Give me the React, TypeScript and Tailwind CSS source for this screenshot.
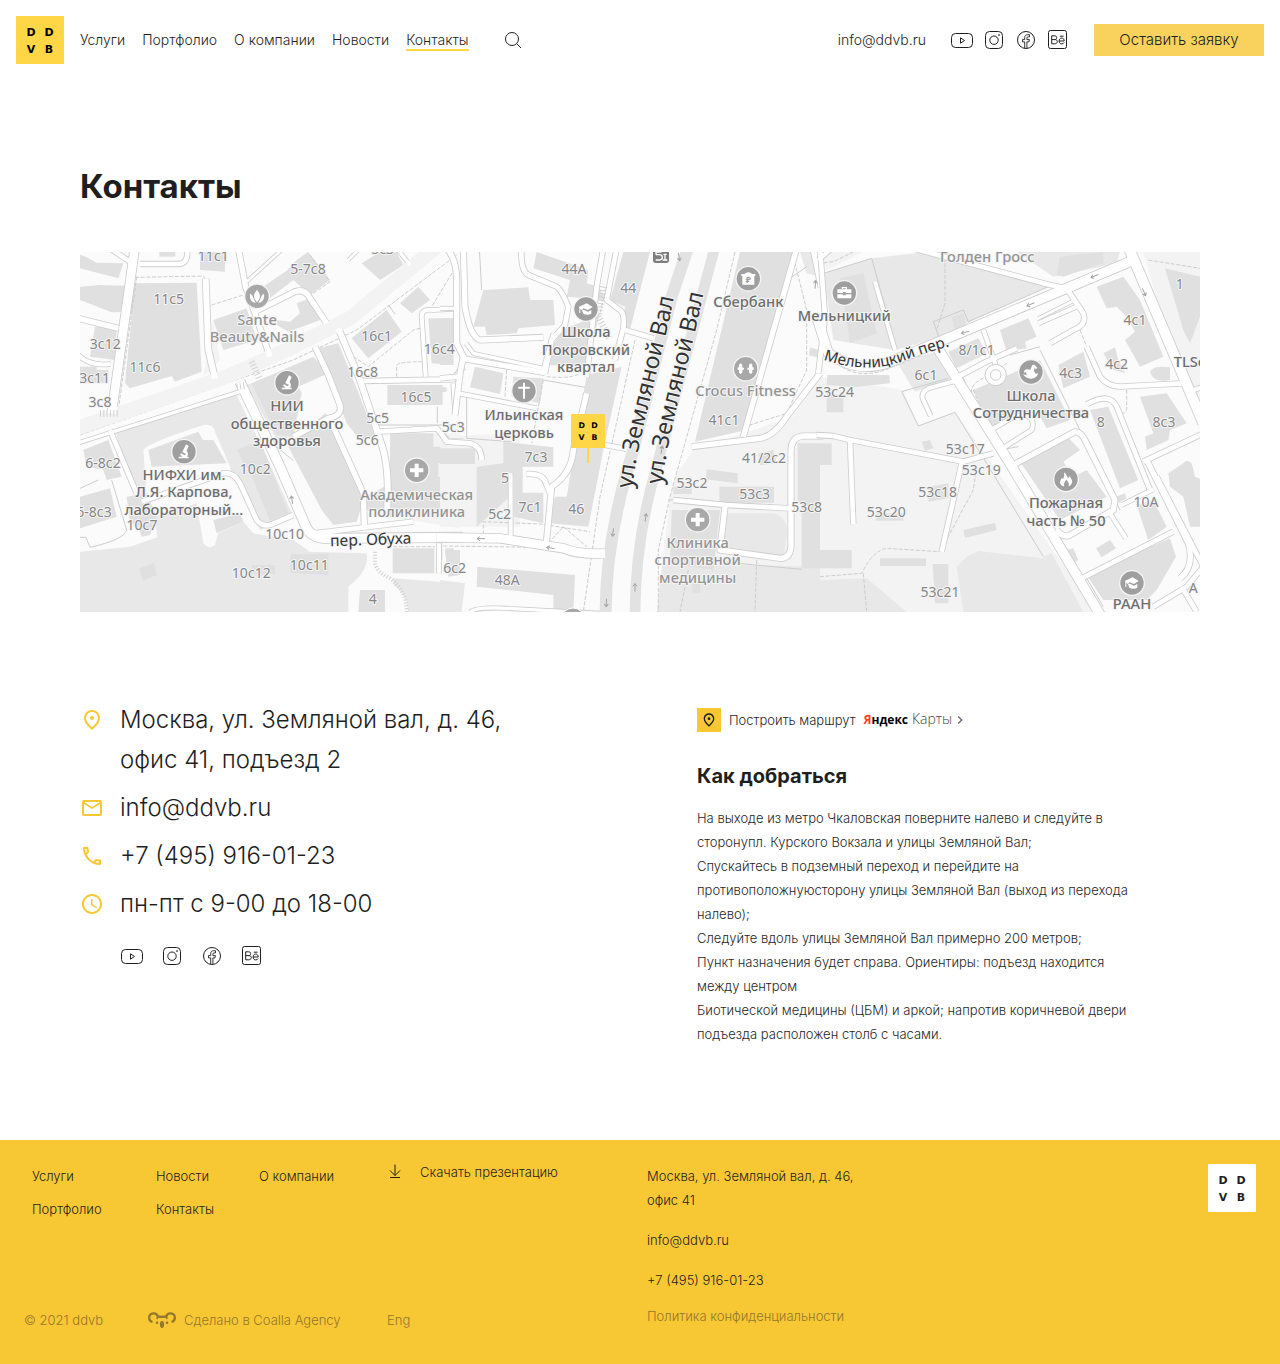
import type { ReactNode } from "react";
import { MdAccessTime, MdChevronRight, MdOutlineEmail, MdOutlinePhone, MdOutlinePlace } from "react-icons/md";

/* ---------- Logo and small icons ---------- */

function LogoLetters({ fill }: { fill: string }) {
  return (
    <g fill={fill} fontFamily='"DejaVu Sans", sans-serif' fontWeight={700} fontSize={11} textAnchor="middle">
      <text x="15" y="20">D</text>
      <text x="33" y="20">D</text>
      <text x="15" y="37">V</text>
      <text x="33" y="37">B</text>
    </g>
  );
}

function Logo({ background, color }: { background: string; color: string }) {
  return (
    <svg viewBox="0 0 48 48" className="size-12 shrink-0" role="img" aria-label="DDVB">
      <rect width="48" height="48" fill={background} />
      <LogoLetters fill={color} />
    </svg>
  );
}

function YoutubeIcon() {
  return (
    <svg viewBox="0 0 24 24" className="size-6" fill="none" stroke="#1f1f1f" strokeLinejoin="round">
      <rect x="1.5" y="5.5" width="21" height="14" rx="4" />
      <path d="M10.5 9.8v5.4l4-2.7z" />
    </svg>
  );
}

function InstagramIcon() {
  return (
    <svg viewBox="0 0 24 24" className="size-6" fill="none" stroke="#1f1f1f">
      <rect x="3.5" y="3.5" width="17" height="17" rx="4" />
      <circle cx="12" cy="12.2" r="4.2" />
      <circle cx="17" cy="7" r="0.6" fill="#1f1f1f" strokeWidth="0.5" />
    </svg>
  );
}

function FacebookIcon() {
  return (
    <svg viewBox="0 0 24 24" className="size-6" fill="none" stroke="#1f1f1f">
      <circle cx="12" cy="12" r="8.5" />
      <path d="M10.7 20.3v-6.4H8.5v-2.3h2.2v-1.9c0-2 1.200-3 3-3h1.800v2.200h-1.300c-.9 0-1.300.4-1.300 1.200v1.500h2.500l-.4 2.300h-2.100v6.400" strokeWidth="0.9" />
    </svg>
  );
}

function BehanceIcon() {
  return (
    <svg viewBox="0 0 24 24" className="size-6" fill="none" stroke="#1f1f1f">
      <rect x="2.500" y="2.500" width="18" height="18" rx="2" />
      <path d="M5.700 7.800v8h3c1.700 0 2.600-.9 2.600-2.200 0-1.200-.8-2-2.200-2H5.700M5.700 7.800h2.800c1.400 0 2.200.7 2.200 1.900 0 1.100-.8 1.900-2 1.900M13.200 13h5c0-1.800-.9-2.900-2.500-2.900s-2.600 1.200-2.600 2.900c0 1.800 1 2.900 2.700 2.900 1.100 0 1.900-.5 2.300-1.400M13.800 8.200h3.800" />
    </svg>
  );
}

function KoalaIcon() {
  return (
    <svg viewBox="0 0 28 16" className="h-4 w-7" fill="none" stroke="#93772b" strokeWidth="2.200">
      <path d="M4.500 10A4.400 4.400 0 1 1 9.800 4.600M18.200 4.600A4.400 4.400 0 1 1 23.500 10" />
      <path d="M9.800 4.600L8.800 7M18.200 4.600L19.200 7" strokeWidth="1.600" />
      <path d="M9.500 4.400Q14 5.400 18.500 4.400" />
      <g fill="#93772b" stroke="none">
        <circle cx="9" cy="10.800" r="1.300" />
        <circle cx="19" cy="10.800" r="1.300" />
        <ellipse cx="14" cy="12.500" rx="2.100" ry="3.400" />
      </g>
    </svg>
  );
}

function Socials({ className }: { className: string }) {
  const items: [string, ReactNode][] = [
    ["YouTube", <YoutubeIcon />],
    ["Instagram", <InstagramIcon />],
    ["Facebook", <FacebookIcon />],
    ["Behance", <BehanceIcon />],
  ];
  return (
    <div className={className}>
      {items.map(([name, icon]) => (
        <a key={name} href="#" aria-label={name}>{icon}</a>
      ))}
    </div>
  );
}

/* ---------- Map: three side-by-side tiles, three drawing units per pixel ---------- */

type Tile = {
  x: number;
  light?: string[];
  parks: string[];
  clear?: string[];
  buildings: string[];
  avenues?: [string, number][];
  roads: [string, number][];
  thin: string[];
  dashed: string[];
};

const tiles: Tile[] = [
  {
    x: 0,
    light: ["M930 550H1140V835L930 800Z", "M400 210L420 330L370 380Z"],
    parks: [
      "M105 540L465 425L560 620L640 800L540 840L470 690L430 670L200 750L160 720Z",
      "M0 905L150 890L232 862L225 800L350 760L370 880Q385 900 405 885L415 850L490 815L520 850L640 870L690 905L860 910Q870 960 805 1010V1086H0Z",
      "M500 405L560 385L640 560L590 570Z",
      "M940 985L1140 1000V1086H985Q980 1030 940 1005Z",
    ],
    clear: ["M190 600Q200 580 370 525Q400 520 405 545L450 650L455 740L200 745Z", "M650 370L700 400L720 470L670 520Z"],
    buildings: [
      "M165 100L350 98L365 365L285 395L275 378L150 415L135 400Z",
      "M0 110L60 105L165 108V185L95 187L0 150Z",
      "M0 14L20 22L50 38L130 40L115 85L0 55Z",
      "M360 6H435V65L360 60Z",
      "M238 6H286V20H238Z",
      "M535 120L620 62L650 30L685 6L750 90L690 135L640 90L555 155Z",
      "M650 160L700 140L735 205L625 245L590 225L590 210L630 215L660 190Z",
      "M400 210L500 175L530 270L430 300Z",
      "M815 265L920 180L965 245L865 325Z",
      "M960 160L1015 110L1050 150L995 190Z",
      "M845 40L900 6H950L970 45L900 90Z",
      "M1045 205H1120V345L1055 340Z",
      "M715 295L775 280L840 440L885 560L840 570L800 520Z",
      "M922 405H1088V412H1100V426H1088V465H922Z",
      "M515 400L700 320L745 370L655 410L665 430L640 560L590 555Z",
      "M625 590L735 490L770 520L850 750L830 815L760 825L725 780Z",
      "M470 600L540 570L625 790L570 812L520 690Z",
      "M205 600L355 545L368 570L400 570L440 640L215 650Z",
      "M515 945H585V972H515Z",
      "M632 912H745V975L630 968Z",
      "M140 740L200 730L230 800L210 855L185 860L175 830L150 820Z",
      "M178 955L222 938L230 975L188 992Z",
      "M400 810L480 790L490 815L410 850Z",
      "M45 230L110 235L105 330L30 320Z",
      "M0 350H50V360H85V400H0Z",
      "M10 600L85 570L125 680L80 690L70 660L20 650Z",
      "M0 740L90 715L110 800L0 835Z",
      "M930 550H1060V590H1140V640H1075V680H1140V780H860V740L930 700Z",
      "M938 895H1063V970H938Z",
      "M840 1020H915V1086H835Z",
      "M1095 900H1140V975H1105Z",
    ],
    avenues: [["M-10 535L440 380L620 300L810 205L1070 -10", 44]],
    roads: [
      ["M165 -10L130 240L95 490", 26],
      ["M-5 205L115 235", 16],
      ["M-5 315Q30 350 92 342", 12],
      ["M90 -5L150 35", 14],
      ["M180 42H295Q325 42 322 -5", 14],
      ["M377 85L385 300L405 385", 18],
      ["M475 -5L497 110L570 320", 16],
      ["M525 185L645 125Q675 115 690 145L740 220", 16],
      ["M775 235L840 390L900 570Q932 650 920 800", 18],
      ["M705 290L745 375L780 465Q788 498 745 505L640 560", 16],
      ["M750 508L850 730L853 830", 16],
      ["M-10 580L480 425", 10],
      ["M480 395L600 650L680 835Q700 870 760 865L1150 862", 28],
      ["M90 540L170 730", 14],
      ["M185 755L430 670Q460 665 480 700L530 810Q545 830 570 825L640 795", 14],
      ["M700 850L1000 815", 14],
      ["M850 393L1120 388L1150 350", 14],
      ["M1037 380L1025 200Q1025 175 1060 180L1140 175", 12],
      ["M1120 400L1125 480", 12],
      ["M895 545L1070 535L1105 575H1150", 14],
      ["M1077 880V970", 12],
      ["M500 95L610 -5", 8],
      ["M805 30L840 -5", 8],
      ["M950 -5L990 45", 10],
    ],
    thin: ["M95 690L140 840Q130 870 30 892L18 862H0", "M850 410L880 525H1140", "M1072 470V520", "M0 715L55 690", "M925 165L945 192", "M590 590L640 632"],
    dashed: [
      "M165 82L370 78L380 90",
      "M170 80L115 480",
      "M110 475L470 350L740 235",
      "M395 165L490 135",
      "M0 555L440 400L640 330L830 240L1130 15",
      "M700 130L750 95L690 15",
      "M820 320L865 350L1000 240L1020 235",
      "M1125 55L1055 170",
      "M950 380V345Q960 335 1030 335",
      "M940 890H1065",
    ],
  },
  {
    x: 1080,
    light: ["M690 700L760 600L1060 500L1140 380V1086H650Z", "M0 560L240 550V830H0Z"],
    parks: ["M0 990L75 1000L65 1086H0Z", "M660 940L1140 950V1086H650Z", "M1080 6H1140V80L1100 70Z", "M860 790H1000Q1042 800 1042 850L1030 922L850 895Z"],
    clear: ["M640 6L885 6L690 740L650 1086H440L480 830L560 480Z"],
    buildings: [
      "M290 6L445 60L440 100L475 110L500 150L380 140L390 90L280 55Z",
      "M130 120L265 112L270 150L340 150L345 225L235 235L230 250L140 255L135 230L100 230Z",
      "M550 6H630L590 160L570 240L545 230L555 170L510 150Z",
      "M0 205H40V345H0Z",
      "M370 240L480 190L450 300L440 350L330 345L335 290Z",
      "M440 375L545 350L490 600L445 830L330 820L345 740L380 740Z",
      "M220 380L310 385L300 460L215 440Z",
      "M105 350L190 370L180 432L90 412Z",
      "M190 575L340 592V650H248V728H310V820L222 800V670L210 740L110 830V650L190 640Z",
      "M0 595H105V642H0Z",
      "M112 950L405 975L400 1086H340V1035L110 1010Z",
      "M15 895H42V912H60V975L25 980Z",
      "M900 6H1065L1040 90L920 540L765 575L830 300Z",
      "M695 780L840 780L820 960L690 940Z",
      "M757 1000H780V1028H757Z",
      "M800 658L893 670V700L798 688Z",
      "M838 710H1002V758H838Z",
      "M700 710H755V732H700Z",
      "M1073 580H1140V955H1085V760H1073Z",
      "M955 610L1000 600L1010 640L960 645Z",
      "M1110 292L1135 300L1130 322L1107 316Z",
    ],
    avenues: [
      ["M745 -10L695 140L580 600Q495 870 497 1100", 36],
      ["M825 -10L785 140L650 650Q585 870 585 1100", 32],
    ],
    roads: [
      ["M20 -5Q52 30 50 100V280L70 320L60 370L45 495", 16],
      ["M70 -5L75 170Q90 260 120 270L310 262", 16],
      ["M65 325L315 368", 16],
      ["M55 430L290 475", 12],
      ["M78 280L100 310L310 355L340 250", 10],
      ["M245 -5Q240 60 265 75L350 110Q365 120 385 170L375 225L335 270L315 370", 14],
      ["M490 -5L470 110L440 380", 14],
      ["M530 -5L500 150L540 180Q555 190 550 235L525 330", 14],
      ["M555 240L640 265", 14],
      ["M440 430L400 600Q395 670 335 710L318 890", 16],
      ["M260 672Q310 670 318 700L330 730", 14],
      ["M495 585L560 597", 14],
      ["M0 385L55 380", 14],
      ["M0 545L20 575L90 580Q125 590 125 630", 14],
      ["M0 175H45", 10],
      ["M212 670V860", 12],
      ["M-10 862L180 865L370 895Q420 915 495 910", 26],
      ["M90 1086Q110 1070 200 1075L480 1090", 10],
      ["M1070 -5L910 560", 16],
      ["M755 590L960 565Q1000 560 1040 500L1140 370", 16],
      ["M1120 -10L1145 110", 20],
      ["M700 750L860 765L1050 775", 14],
      ["M855 770L840 900L1020 925Q1050 925 1053 890V600Q1055 560 1090 558H1150", 16],
    ],
    thin: ["M5 880V930", "M80 430V565L215 575", "M310 390L435 412", "M840 935L1085 958", "M1050 85L1100 50", "M685 750H740", "M118 -5L125 120"],
    dashed: [
      "M585 270L480 740L430 1086",
      "M885 6L830 240L690 740L655 900V1086",
      "M130 870V815L300 822L450 845",
      "M325 880L370 830L440 890",
      "M200 360L195 440",
      "M310 390L275 580",
      "M320 380Q430 390 430 350",
      "M1060 20L1100 180V360L1040 490L930 525",
      "M500 110L480 190",
      "M745 960L720 1086",
      "M950 930L945 1086",
      "M10 888L300 892L440 905",
    ],
  },
  {
    x: 2220,
    light: ["M0 380L250 420L295 525L405 485L830 1086H0Z", "M970 6H1140V520L1080 390Z", "M0 6H130L20 60Z"],
    parks: [
      "M10 70L155 25L320 6L690 108L480 200L370 260L225 300L165 290L40 270Z",
      "M440 920L475 903L670 925L760 1086H430L410 950Z",
      "M0 990L140 985L260 1086H0Z",
      "M670 920L695 910L790 1086H700Z",
      "M230 335L350 305L400 385L285 425Z",
      "M590 6H900L890 40L700 80Z",
    ],
    clear: ["M740 230L860 200L1060 380L870 400L840 380L800 280Z"],
    buildings: [
      "M60 85L130 70L170 250L90 280Z",
      "M720 20L850 6V40L730 80L710 75Z",
      "M1035 55L1140 80V200L1110 280L1090 240Z",
      "M830 110L910 80L960 150L1030 320L960 350L915 270L945 245L920 200L890 170L860 175Z",
      "M850 310L885 292L895 330L915 370L880 360Z",
      "M715 345L790 305L810 380L730 415Z",
      "M540 240L625 205L650 260L615 275L620 295L560 305Z",
      "M385 305L475 265L500 310L410 355Z",
      "M460 420L600 360L660 330L750 510L680 535L650 480L510 530Z",
      "M600 635L740 558L780 600L730 635L760 680L800 660L860 740L720 810Z",
      "M810 480L865 470L955 690L900 715Z",
      "M960 440L1040 430L1100 520L1050 540L1045 570L980 600L975 560L1000 550Z",
      "M990 365Q1000 345 1050 352V390Q1000 400 990 365Z",
      "M1045 670L1090 640Q1100 625 1115 640L1125 680L1150 690V830H1110L1090 740L1050 710Z",
      "M950 765L1000 750L1040 830L985 870Z",
      "M800 975L1050 865L1068 920L1010 1020L980 1050H850Z",
      "M828 895L870 870L888 895L845 922Z",
      "M740 900L760 895L775 930L760 940Z",
      "M22 375H208L210 400L100 412L20 405Z",
      "M20 425L70 440V487H20Z",
      "M0 580H35V645H0Z",
      "M325 710L385 700V745L325 755Z",
      "M430 840L525 818L530 840L435 864Z",
      "M0 900H95V955H0Z",
      "M180 925H318V948H180Z",
      "M338 942H385V1060H345Z",
      "M395 200L430 190L440 230L405 245Z",
      "M305 575L330 570L340 595L315 602Z",
      "M888 740L915 730L920 745L892 760Z",
      "M168 790H250V812H168Z",
    ],
    roads: [
      ["M-10 200L25 310Q110 370 200 340L370 270L930 35", 28],
      ["M0 -5L15 200L-5 370", 14],
      ["M-5 30L30 0", 12],
      ["M260 -10L690 105L740 115L790 190Q800 222 770 235L690 280", 14],
      ["M165 95L225 300", 12],
      ["M655 220L770 170", 12],
      ["M655 205L765 150", 8],
      ["M490 240L527 345", 12],
      ["M415 380L500 335L590 295", 14],
      ["M405 393L325 415Q300 430 310 450L332 498", 12],
      ["M512 540L600 490Q650 500 635 540L540 600", 12],
      ["M-10 555L40 558L90 570L430 635L520 610", 14],
      ["M90 570L100 822", 14],
      ["M425 640L365 905", 14],
      ["M800 290L840 380Q860 408 900 410L1085 400", 14],
      ["M800 463Q870 425 890 470L990 720", 14],
      ["M570 650L765 545Q785 545 800 580L885 750L880 780L750 855Q730 865 710 840", 16],
      ["M870 790L918 865", 12],
      ["M905 765L1000 718", 12],
      ["M350 290L570 640L850 1110", 28],
      ["M925 -10L1150 520", 30],
      ["M970 635L1150 550", 14],
      ["M980 630L1105 880Q1125 950 1080 985", 16],
      ["M1010 680L1150 950L1100 1010L1000 1070", 14],
      ["M785 985L1060 845", 14],
      ["M1120 420L1150 410", 12],
      ["M1085 1010L1130 1086", 14],
    ],
    thin: [
      "M245 425L295 528L405 487L500 640L670 920",
      "M245 425L385 385",
      "M340 215L430 180L445 215L690 108",
      "M340 215L360 270",
      "M155 25L225 280",
      "M10 70L155 25",
      "M660 300L760 500L900 780",
      "M595 590L540 600L600 680",
      "M430 385L500 550",
      "M570 315L660 290",
      "M800 985L850 1070",
    ],
    dashed: [
      "M375 6V160L350 240",
      "M40 330Q110 400 220 350L920 55",
      "M780 240L800 290L830 340",
      "M460 420L500 520",
      "M0 980L125 970Q160 900 200 895L360 905L460 720L470 650",
      "M130 970L140 1086",
      "M985 30L1140 55",
      "M920 420V480L900 500L960 620",
      "M940 60L1120 480",
      "M580 660L680 820L800 1030",
      "M455 430Q450 400 500 380L560 340",
      "M0 0V40L40 35L100 6",
    ],
  },
];

// House numbers: label, centre x, baseline y
const houses: [string, number, number][] = [
  ["11с1", 400, 34], ["5-7с8", 684, 72], ["5с3", 908, 12], ["11с5", 266, 162], ["3с12", 76, 297], ["11с6", 195, 366],
  ["3с11", 44, 400], ["3с8", 60, 470], ["16с1", 890, 273], ["16с4", 1078, 312], ["16с8", 848, 381], ["16с5", 1008, 456],
  ["5с5", 893, 518], ["5с6", 862, 586], ["5с3", 1120, 546], ["6-8с2", 69, 654], ["6-8с3", 42, 800], ["10с2", 526, 672],
  ["10с7", 186, 841], ["10с10", 614, 867], ["10с12", 514, 984], ["10с11", 688, 960], ["4", 878, 1062], ["6с2", 1124, 970],
  ["44А", 1482, 72], ["44", 1645, 130], ["7с3", 1368, 636], ["5", 1275, 699], ["5с2", 1259, 806], ["7с1", 1350, 787],
  ["46", 1489, 791], ["48А", 1282, 1006], ["41с1", 1932, 525], ["41/2с2", 2052, 639], ["53с2", 1836, 713], ["53с3", 2024, 748],
  ["53с8", 2180, 787], ["53с24", 2264, 441], ["8/1с1", 2690, 315], ["6с1", 2538, 391], ["4с1", 3165, 224], ["1", 3299, 117],
  ["4с3", 2972, 384], ["4с2", 3110, 358], ["8", 3062, 530], ["8с3", 3252, 530], ["53с17", 2656, 612], ["53с19", 2704, 676],
  ["53с18", 2573, 741], ["53с20", 2419, 801], ["53с21", 2580, 1040], ["10А", 3198, 771], ["А", 3340, 1030],
];

type Glyph = "lotus" | "scope" | "cross" | "church" | "cap" | "bank" | "gym" | "case" | "horse" | "fire";
type Place = { x: number; y: number; lines: string[]; strong: boolean; icon?: Glyph; iconY?: number };

const places: Place[] = [
  { x: 531, y: 225, lines: ["Sante", "Beauty&Nails"], strong: false, icon: "lotus", iconY: 139 },
  { x: 621, y: 484, lines: ["НИИ", "общественного", "здоровья"], strong: true, icon: "scope", iconY: 398 },
  { x: 312, y: 690, lines: ["НИФХИ им.", "Л.Я. Карпова,", "лабораторный..."], strong: true, icon: "scope", iconY: 605 },
  { x: 1010, y: 749, lines: ["Академическая", "поликлиника"], strong: false, icon: "cross", iconY: 661 },
  { x: 1518, y: 262, lines: ["Школа", "Покровский", "квартал"], strong: true, icon: "cap", iconY: 177 },
  { x: 1332, y: 511, lines: ["Ильинская", "церковь"], strong: true, icon: "church", iconY: 422 },
  { x: 2005, y: 171, lines: ["Сбербанк"], strong: true, icon: "bank", iconY: 86 },
  { x: 1997, y: 439, lines: ["Crocus Fitness"], strong: false, icon: "gym", iconY: 356 },
  { x: 2293, y: 213, lines: ["Мельницкий"], strong: true, icon: "case", iconY: 129 },
  { x: 1853, y: 894, lines: ["Клиника", "спортивной", "медицины"], strong: false, icon: "cross", iconY: 809 },
  { x: 2722, y: 37, lines: ["Голден Гросс"], strong: false },
  { x: 2853, y: 453, lines: ["Школа", "Сотрудничества"], strong: true, icon: "horse", iconY: 366 },
  { x: 2958, y: 775, lines: ["Пожарная", "часть № 50"], strong: true, icon: "fire", iconY: 688 },
  { x: 3156, y: 1078, lines: ["РААН"], strong: true, icon: "cap", iconY: 999 },
  { x: 3328, y: 352, lines: ["TLSc"], strong: true },
];

const glyphs: Record<Glyph, ReactNode> = {
  lotus: <path d="M0-20Q18 0 0 18Q-18 0 0-20M-21-8Q-14-6-12 2Q-10 12-3 19Q-24 18-21-8M21-8Q14-6 12 2Q10 12 3 19Q24 18 21-8" />,
  scope: <path d="M6-22L14-17L4 6L-5 1ZM8-2Q16 8 8 15H14V20H-16V15H-4L-12 9L-9 5L2 11Q8 7 4 4Z" />,
  cross: <path d="M-6-20H6V-6H20V6H6V20H-6V6H-20V-6H-6Z" />,
  church: <path d="M-3-24H3V-12H17V-6H3V24H-3V-6H-17V-12H-3Z" />,
  cap: <path d="M-22-6L2-17L20-6L6 3L-8-2L-12 4ZM-12 4L-7 2L6 8L16 3V14Q4 20-8 14ZM-20-4H-17V12H-20Z" />,
  bank: (
    <>
      <path d="M-21-14H-12Q0-24 12-14H21V-8H18V18H-18V-8H-21Z" />
      <text y="12" fontSize="26" fontWeight="700" textAnchor="middle" fill="#9f9f9f">₽</text>
    </>
  ),
  gym: <path d="M-24-4H-20V-12L-16-16L-10-12V-3H-5V3H-10V12L-16 16L-20 12V4H-24ZM24-4H20V-12L16-16L10-12V-3H5V3H10V12L16 16L20 12V4H24Z" />,
  case: <path d="M-8-18H8V-11H21V0H4V-3H-4V0H-21V-11H-8ZM-4-14V-11H4V-14ZM-21 4H-4V7H4V4H21V16H-21Z" />,
  horse: <path d="M4-21L10-22L19-13L16-9L10-11L9-3L14 5L22 4Q16 20 0 20Q-16 20-24 6L-13 10L-15 0L-21 2Q-21-8-12-8L-2-7Z" />,
  fire: <path d="M-6-21Q6-10 5-2L11-9Q22 4 17 13Q14 20 7 21Q12 12 1 1Q-9 12-5 21Q-16 20-18 10Q-18 2-12-5L-9 0Q-3-9-6-21" />,
};

const arrows: [number, number, number][] = [
  [1797, 20, 80], [1745, 600, -80], [1697, 803, -82], [1599, 847, 98], [1665, 1013, -90], [1579, 1058, 92], [1203, 866, 180],
  [1412, 894, 190], [3044, 78, 157], [2852, 163, 157], [2656, 247, 165], [3192, 126, 66], [2206, 104, -85], [636, 750, -100],
];

function CityMap() {
  return (
    <svg
      viewBox="0 6 3360 1080"
      preserveAspectRatio="xMidYMid slice"
      className="block h-90 w-full font-normal"
      role="img"
      aria-label="Карта: Москва, ул. Земляной вал, д. 46"
      fontFamily='"Noto Sans", "Open Sans", sans-serif'
    >
      <rect width="3360" height="1092" fill="#fbfbfb" />
      {tiles.map((t) => (
        <g key={t.x} transform={`translate(${t.x} 0)`}>
          {t.light?.map((d) => <path key={d} d={d} fill="#f3f3f3" />)}
          {t.parks.map((d) => <path key={d} d={d} fill="#e8e8e8" />)}
          {t.clear?.map((d) => <path key={d} d={d} fill="#fbfbfb" />)}
          {t.buildings.map((d) => <path key={d} d={d} fill="#e0e0e0" />)}
          <g fill="none" stroke="#cdcdcd" strokeWidth="3">
            {t.thin.map((d) => <path key={d} d={d} />)}
            <g strokeDasharray="12 5">{t.dashed.map((d) => <path key={d} d={d} />)}</g>
          </g>
        </g>
      ))}
      {tiles.map((t) => (
        <g key={t.x} transform={`translate(${t.x} 0)`} fill="none" strokeLinejoin="round">
          <g stroke="#cdcdcd">{t.roads.map(([d, w]) => <path key={d} d={d} strokeWidth={w + 5} />)}</g>
          <g stroke={t.x === 1080 ? "#e2e2e2" : "#f3f3f3"}>
            {t.avenues?.map(([d, w]) => <path key={d} d={d} strokeWidth={w} />)}
          </g>
          <g stroke="#ffffff">{t.roads.map(([d, w]) => <path key={d} d={d} strokeWidth={w} />)}</g>
        </g>
      ))}
      <g fill="#ffffff" stroke="#cbcbcb" strokeWidth="3">
        <circle cx="2747" cy="375" r="32" />
        <circle cx="2747" cy="375" r="16" />
      </g>
      <path d="M885 905V940Q890 965 930 985Q980 1020 980 1086" fill="none" stroke="#d2d2d2" strokeWidth="12" strokeDasharray="3 6" />
      <g fill="none" stroke="#d2d2d2" strokeWidth="20" strokeDasharray="3 7">
        <path d="M1570 110L1555 200L1590 270" />
        <path d="M515 335L540 390" />
        <path d="M60 490H115M470 410L500 405" />
      </g>
      <g fill="none" stroke="#a3a3a3" strokeWidth="3">
        {arrows.map(([x, y, a]) => (
          <path key={`${x}-${y}`} d="M-12 0H12M4-6L12 0L4 6" transform={`translate(${x} ${y}) rotate(${a})`} />
        ))}
      </g>
      <g>
        <rect x="1719" y="-10" width="48" height="49" rx="8" fill="#7d7d7d" />
        <path d="M1728 14H1738Q1747 14 1747 22T1738 30H1727M1728 14V6H1744M1750 13H1760M1755 13V30M1748 30H1762" fill="none" stroke="#fff" strokeWidth="4" />
      </g>
      <circle cx="1479" cy="1110" r="36" fill="#a8a8a8" stroke="#fff" strokeWidth="3" />

      <g stroke="#f5f5f5" strokeWidth="6" strokeLinejoin="round" paintOrder="stroke" textAnchor="middle">
        <g fontSize="42" fill="#868686">
          {houses.map(([label, x, y]) => <text key={`${label}-${x}`} x={x} y={y}>{label}</text>)}
        </g>
        {places.map((p) => (
          <g key={p.lines.join()} fontSize="44" fontWeight="500" fill={p.strong ? "#6e6e6e" : "#949494"}>
            {p.lines.map((line, i) => <text key={line} x={p.x} y={p.y + i * 52}>{line}</text>)}
          </g>
        ))}
        <g fill="#333333" textAnchor="start">
          <path id="val-west" d="M577 716C592 560 668 330 706 120" transform="translate(1080 0)" fill="none" stroke="none" />
          <path id="val-east" d="M666 704C682 550 755 318 796 100" transform="translate(1080 0)" fill="none" stroke="none" />
          <path id="melnitsky" d="M2230 329Q2375 378 2490 325Q2560 300 2650 278" fill="none" stroke="none" />
          <text fontSize="69"><textPath href="#val-west">ул. Земляной Вал</textPath></text>
          <text fontSize="69"><textPath href="#val-east">ул. Земляной Вал</textPath></text>
          <text fontSize="46"><textPath href="#melnitsky">Мельницкий пер.</textPath></text>
          <text fontSize="47" transform="translate(751 889) rotate(-2)">пер. Обуха</text>
        </g>
      </g>

      {places.map((p) =>
        p.icon ? (
          <g key={p.lines.join()} transform={`translate(${p.x} ${p.iconY})`}>
            <circle r="37" fill={p.strong ? "#9f9f9f" : "#a8a8a8"} stroke="#f5f5f5" strokeWidth="4" />
            <g fill="#ffffff">{glyphs[p.icon]}</g>
          </g>
        ) : null,
      )}

      <g transform="translate(1473 492)">
        <rect x="48" y="100" width="6" height="47" fill="#ffd646" />
        <svg width="102" height="102" viewBox="0 0 48 48">
          <rect width="48" height="48" fill="#ffd646" />
          <LogoLetters fill="#000000" />
        </svg>
      </g>
    </svg>
  );
}

/* ---------- Page ---------- */

function Header() {
  const links = ["Услуги", "Портфолио", "О компании", "Новости"];
  return (
    <header className="flex h-20 items-center px-4">
      <a href="#"><Logo background="#ffd646" color="#000000" /></a>
      <nav className="ml-4 flex items-center gap-[17px] text-sm leading-5">
        {links.map((l) => <a key={l} href="#">{l}</a>)}
        <a href="#" aria-current="page" className="relative">
          Контакты
          <span className="absolute inset-x-0 -bottom-px h-0.5 bg-[#ffd646]" />
        </a>
      </nav>
      <button type="button" aria-label="Поиск" className="ml-8">
        <svg viewBox="0 0 24 24" className="size-6" fill="none" stroke="#1f1f1f">
          <circle cx="11" cy="11" r="6.500" />
          <path d="M15.800 15.800L20 20" />
        </svg>
      </button>
      <div className="ml-auto flex items-center gap-6">
        <a href="mailto:info@ddvb.ru" className="text-sm leading-5">info@ddvb.ru</a>
        <Socials className="flex gap-2" />
        <button type="button" className="h-8 w-[170px] bg-[#f9d25d] text-[15px] leading-8">Оставить заявку</button>
      </div>
    </header>
  );
}

function ContactRow({ icon, children }: { icon: ReactNode; children: ReactNode }) {
  return (
    <li className="flex gap-4">
      <span className="flex h-10 items-center text-2xl text-[#f8c734]">{icon}</span>
      <span>{children}</span>
    </li>
  );
}

const directions = [
  "На выходе из метро Чкаловская поверните налево и следуйте в",
  "сторонупл. Курского Вокзала и улицы Земляной Вал;",
  "Спускайтесь в подземный переход и перейдите на",
  "противоположнуюсторону улицы Земляной Вал (выход из перехода",
  "налево);",
  "Следуйте вдоль улицы Земляной Вал примерно 200 метров;",
  "Пункт назначения будет справа. Ориентиры: подъезд находится",
  "между центром",
  "Биотической медицины (ЦБМ) и аркой; напротив коричневой двери",
  "подъезда расположен столб с часами.",
];

function Contacts() {
  return (
    <div className="grid grid-cols-2 gap-[114px] pt-24">
      <div>
        <ul className="-mt-2 flex flex-col gap-2 text-2xl leading-10">
          <ContactRow icon={<MdOutlinePlace />}>Москва, ул. Земляной вал, д. 46,<br />офис 41, подъезд 2</ContactRow>
          <ContactRow icon={<MdOutlineEmail />}><a href="mailto:info@ddvb.ru">info@ddvb.ru</a></ContactRow>
          <ContactRow icon={<MdOutlinePhone />}><a href="tel:+74959160123">+7 (495) 916-01-23</a></ContactRow>
          <ContactRow icon={<MdAccessTime />}>пн-пт с 9-00 до 18-00</ContactRow>
        </ul>
        <Socials className="mt-5 ml-10 flex gap-4" />
      </div>
      <section>
        <a href="#" className="flex h-6 items-center text-[13px] leading-6">
          <span className="mr-2 flex size-6 items-center justify-center bg-[#f8c734] text-base"><MdOutlinePlace /></span>
          Построить маршрут
          <span className="ml-2 flex items-baseline gap-1 font-['Open_Sans',sans-serif] text-black">
            <span className="text-[12px] font-bold"><span className="text-[#fc3f1d]">Я</span>ндекс</span>
            <span className="text-sm text-[#444444]">Карты</span>
          </span>
          <MdChevronRight className="text-base text-[#666a75]" />
        </a>
        <h2 className="mt-7 text-xl leading-8 font-bold">Как добраться</h2>
        <p className="mt-[14px] text-[13px] leading-6">
          {directions.map((line) => <span key={line} className="block">{line}</span>)}
        </p>
      </section>
    </div>
  );
}

function Footer() {
  return (
    <footer className="flex bg-[#f8c734] px-6 pt-6 pb-8 text-[13px] leading-6">
      <div className="flex w-[623px] flex-col justify-between">
        <div className="flex">
          <ul className="flex w-[132px] flex-col gap-[9px] pl-2">
            <li><a href="#">Услуги</a></li>
            <li><a href="#">Портфолио</a></li>
          </ul>
          <ul className="flex w-[103px] flex-col gap-[9px]">
            <li><a href="#">Новости</a></li>
            <li><a href="#">Контакты</a></li>
          </ul>
          <a href="#" className="w-[128px]">О компании</a>
          <a href="#" className="flex h-4 gap-[17px] leading-4">
            <svg viewBox="0 0 16 16" className="size-4" fill="none" stroke="#1f1f1f">
              <path d="M8 0.500V11.500M3 6.500L8 11.500L13 6.500M3 13.500H13" />
            </svg>
            Скачать презентацию
          </a>
        </div>
        <div className="flex text-[#93772b]">
          <span className="w-[124px]">© 2021 ddvb</span>
          <a href="#" className="flex w-[239px] items-center gap-2"><KoalaIcon />Сделано в Coalla Agency</a>
          <a href="#">Eng</a>
        </div>
      </div>
      <div className="flex flex-col pb-1">
        <span>Москва, ул. Земляной вал, д. 46,<br />офис 41</span>
        <a href="mailto:info@ddvb.ru" className="mt-4">info@ddvb.ru</a>
        <a href="tel:+74959160123" className="mt-4">+7 (495) 916-01-23</a>
        <a href="#" className="mt-3 text-[#93772b]">Политика конфиденциальности</a>
      </div>
      <a href="#" className="ml-auto"><Logo background="#ffffff" color="#1f1f1f" /></a>
    </footer>
  );
}

export default function App() {
  return (
    <div className="bg-white font-[Inter,'Liberation_Sans',sans-serif] font-light text-[#1f1f1f]">
      <Header />
      <main className="px-20 pt-20 pb-[94px]">
        <h1 className="mb-10 text-[33px] leading-[52px] font-bold">Контакты</h1>
        <CityMap />
        <Contacts />
      </main>
      <Footer />
    </div>
  );
}
